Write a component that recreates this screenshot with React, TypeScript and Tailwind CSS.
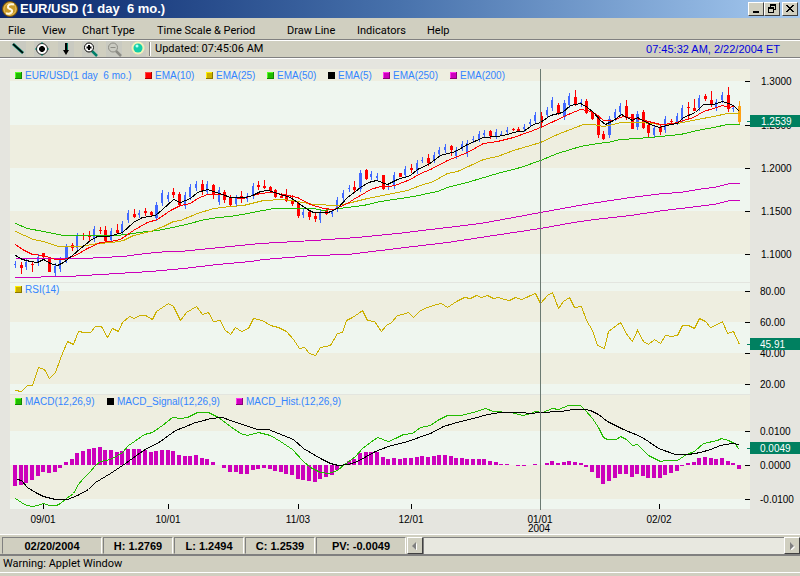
import React from 'react';

type Tone = 'up' | 'down' | 'last';
type Candle = [high: number, low: number, top: number, bottom: number, tone: Tone];

const FIRST_X = 15;
const STEP = 5.656;
const barX = (i: number) => Math.round(FIRST_X + i * STEP);

const toneColors: Record<Tone, string> = {
  up: '#4169ff',
  down: '#ff0000',
  last: '#ffa114',
};

const up = (high: number, low: number): Candle => [high, low, high + 3, low - 3, 'up'];
const down = (high: number, low: number, top: number, bottom: number): Candle => [high, low, top, bottom, 'down'];

const candles: Candle[] = [
  up(261, 268), down(262, 274, 265, 268), up(259, 270), down(261, 272, 264, 265), up(254, 266),
  down(253, 258, 253, 257), down(257, 272, 257, 272), up(263, 276), up(257, 272), up(244, 263),
  down(243, 251, 245, 248), up(233, 251), down(233, 240, 235, 236), down(231, 241, 236, 237), up(226, 242),
  down(227, 234, 230, 231), down(226, 242, 230, 241), up(228, 243), down(224, 234, 230, 233), up(221, 235),
  up(210, 223), down(209, 218, 214, 217), up(210, 218), down(208, 216, 211, 213), down(211, 216, 212, 215),
  up(202, 221), up(190, 206), up(192, 202), down(188, 198, 192, 195), down(192, 207, 194, 205),
  up(192, 209), up(184, 200), up(181, 191), down(180, 195, 184, 191), up(181, 195),
  down(184, 199, 185, 195), up(187, 205), down(190, 203, 192, 200), down(195, 206, 198, 205), up(195, 207),
  down(191, 203, 196, 199), up(193, 202), up(183, 199), down(181, 190, 185, 187), down(180, 189, 186, 188),
  down(186, 192, 187, 191), down(189, 198, 190, 197), down(193, 198, 196, 198), down(189, 202, 196, 201), down(195, 206, 200, 204),
  down(201, 218, 203, 216), up(209, 218), down(210, 220, 212, 217), down(213, 222, 216, 219), up(210, 223),
  down(209, 215, 210, 214), up(209, 217), up(197, 212), up(190, 201), up(185, 192),
  down(181, 192, 187, 190), up(170, 192), down(169, 180, 170, 179), up(171, 180), up(173, 181),
  down(175, 190, 175, 189), up(183, 190), up(172, 189), down(173, 177, 173, 177), up(166, 178),
  down(164, 173, 168, 170), up(160, 174), up(157, 163), down(154, 166, 158, 163), up(152, 163),
  up(147, 157), up(144, 153), down(145, 156, 146, 150), up(147, 159), up(141, 151),
  up(140, 157), up(136, 143), up(131, 142), up(130, 138), down(130, 139, 131, 136),
  up(129, 139), up(131, 136), up(127, 135), down(128, 131, 129, 130), down(127, 131, 129, 131),
  up(124, 132), up(119, 127), up(112, 124), down(112, 126, 116, 123), up(107, 118),
  up(97, 111), down(103, 115, 105, 114), up(100, 120), up(93, 108), down(90, 106, 97, 104),
  up(99, 107), down(99, 114, 101, 113), down(111, 120, 112, 119), down(115, 138, 118, 135), down(131, 140, 134, 139),
  up(116, 138), up(109, 121), up(103, 115), down(100, 120, 106, 118), down(114, 129, 114, 129),
  up(111, 130), down(110, 129, 112, 128), down(122, 137, 125, 133), up(125, 138), down(124, 135, 127, 132),
  up(116, 133), down(119, 125, 121, 122), up(113, 125), up(105, 123), down(102, 118, 107, 108),
  down(99, 111, 108, 111), up(95, 111), down(94, 101, 96, 99), down(91, 107, 100, 104), up(99, 111),
  up(92, 103), down(87, 112, 95, 109), up(105, 112), [101, 125, 106, 122, 'last'],
];

const histogram = [
  -21, -20, -18, -15, -11, -7, -8, -7, -3, 3, 6, 12, 14, 16, 17, 18, 15, 15, 13, 14,
  16, 16, 16, 15, 13, 14, 15, 15, 14, 10, 9, 9, 10, 7, 6, 3, 0, -3, -7, -7,
  -9, -9, -5, -4, -3, -4, -6, -7, -9, -10, -14, -15, -16, -17, -14, -12, -10, -5, 0, 4,
  6, 12, 13, 13, 13, 8, 6, 7, 6, 7, 7, 8, 9, 8, 9, 10, 10, 9, 7, 7,
  6, 6, 6, 6, 4, 3, 1, 1, 0, -1, -1, 0, 1, 0, 2, 4, 2, 3, 4, 3,
  2, -2, -7, -13, -19, -16, -13, -9, -9, -12, -9, -11, -13, -13, -13, -10, -8, -6, -1, 2,
  3, 7, 8, 7, 6, 7, 4, 2, -4,
];

const priceLines = [
  {
    name: 'EMA(200)',
    color: '#cc00bb',
    points:
      '15,258 85,258 100,257 123,256 145,253 167,251 180,251 220,247 260,243 313,240 357,237 397,233 430,229 447,227 480,223 513,217 540,212 573,206 597,202 630,197 663,193 680,192 697,189 713,187 730,183 739,183',
  },
  {
    name: 'EMA(250)',
    color: '#cc00bb',
    points:
      '15,277 67,276 100,274 150,271 183,268 217,264 250,261 263,259 313,255 347,254 380,250 413,246 447,242 480,237 513,232 540,228 573,222 594,219 630,215 663,210 680,208 713,204 730,200 739,200',
  },
  {
    name: 'EMA(50)',
    color: '#22bb00',
    points:
      '15,223 27,228 43,231 63,235 78,235 115,235 127,234 138,232 157,230 172,227 190,223 200,220 217,217 230,216 247,213 273,208 313,208 323,210 338,208 363,205 380,201 413,196 437,191 447,187 470,181 497,173 520,167 540,160 557,153 580,146 597,143 607,142 620,139 637,138 660,136 680,134 697,130 713,127 727,124 739,124',
  },
  {
    name: 'EMA(25)',
    color: '#ccb000',
    points:
      '15,231 33,239 43,241 58,246 80,246 97,243 112,242 123,240 133,235 150,231 163,226 173,221 180,220 197,213 213,208 230,206 243,205 263,200 283,199 297,201 313,204 337,205 347,203 367,198 387,194 407,190 420,185 433,181 447,173 457,171 470,165 483,159 497,156 513,150 530,145 540,142 557,134 570,129 583,124 593,124 603,126 613,124 620,122 640,122 660,124 677,123 697,119 713,116 727,113 739,113',
  },
  {
    name: 'EMA(10)',
    color: '#ff0000',
    points:
      '15,244 22,249 32,254 43,255 55,259 63,259 75,255 87,248 100,242 110,241 120,239 133,230 147,222 157,219 170,210 180,205 190,203 197,198 207,194 222,194 230,197 243,198 252,195 260,193 270,192 283,194 297,197 310,204 323,208 333,209 347,203 353,199 360,195 370,189 380,186 390,186 397,184 410,179 420,173 430,169 447,160 467,152 483,143 497,141 513,137 530,131 540,127 553,121 570,113 580,109 587,110 595,113 603,120 612,120 623,116 640,119 660,124 673,123 683,120 693,117 703,111 713,108 722,105 728,107 734,106 739,111',
  },
  {
    name: 'EMA(5)',
    color: '#000000',
    points:
      '15,255 22,259 30,261 37,262 43,259 50,263 57,265 63,262 72,255 80,248 90,240 97,236 108,236 122,232 133,222 142,217 155,215 162,209 173,199 180,202 190,198 197,192 207,189 213,191 222,194 230,197 245,197 252,195 260,191 268,190 277,193 290,197 297,202 307,209 313,212 323,212 328,212 337,208 347,197 355,191 360,187 368,182 376,180 387,184 397,179 410,175 417,169 428,164 440,155 455,151 467,144 483,137 497,136 503,135 517,131 523,131 533,124 540,122 550,115 562,112 570,105 580,103 587,107 593,112 600,120 605,124 613,120 621,114 632,120 637,117 650,124 659,127 670,124 677,123 683,117 695,112 703,104 713,104 722,101 728,103 733,105 739,111',
  },
];

const rsiLine =
  '15,390 21,391 27,385 32,385 38,367 44,369 49,378 55,372 60,358 67,341 73,344 78,331 84,332 90,332 95,326 101,326 107,337 112,328 118,331 122,322 129,316 134,318 139,315 145,315 152,319 156,311 162,307 168,303 173,306 180,320 186,312 196,306 202,314 208,312 213,321 220,320 224,329 230,334 235,327 241,331 248,328 253,318 262,320 270,325 278,327 286,331 293,339 299,348 304,347 309,353 315,355 320,347 330,345 337,333 342,332 346,320 352,317 358,313 362,310 367,320 374,321 381,331 386,325 391,322 397,315 402,314 408,312 413,317 419,311 424,308 430,306 436,304 441,303 447,307 453,303 458,300 464,297 470,298 476,295 481,297 487,295 493,298 498,297 504,299 509,300 515,297 521,299 526,297 530,295 535,293 540,303 547,295 552,292 558,308 563,301 569,297 574,307 581,306 586,320 592,330 597,345 604,348 608,331 620,322 627,335 632,341 637,330 643,341 648,344 654,339 660,343 665,335 671,336 677,335 682,325 688,325 694,328 699,318 705,321 710,327 717,324 722,321 727,333 733,331 739,344';

const macdLine =
  '15,498 21,502 26,505 32,506 37,505 43,503 49,505 56,505 60,503 66,498 73,493 78,484 83,478 89,472 95,465 100,461 106,460 112,458 122,452 128,445 134,441 144,434 152,432 162,425 172,417 180,418 187,417 197,412 208,412 218,417 230,426 240,433 247,435 258,432 270,435 280,441 292,449 303,461 310,467 320,472 328,473 337,470 343,465 355,456 362,448 370,442 377,437 388,441 395,438 403,434 412,433 420,427 430,425 437,420 447,415 460,415 473,412 485,408 493,411 510,412 523,415 530,413 535,411 542,412 552,408 558,409 568,405 580,405 585,410 592,418 598,427 603,437 607,439 616,439 620,436 626,439 632,445 637,444 648,455 660,461 665,460 677,460 686,454 694,451 703,443 717,440 721,438 728,440 734,443 739,449';

const signalLine =
  '17,479 21,480 27,487 35,492 43,496 55,499 67,499 77,495 88,489 95,482 110,473 125,463 143,450 160,441 175,430 183,427 195,422 200,421 210,418 222,417 230,420 245,425 257,429 268,429 278,433 293,439 303,448 320,458 330,463 338,465 348,464 357,461 375,451 388,446 407,441 430,433 443,426 460,421 473,418 487,414 500,412 520,412 530,413 540,412 560,411 573,409 585,409 590,410 598,414 607,421 623,429 640,436 648,441 658,448 675,454 688,454 700,452 710,449 720,445 732,443 739,444';

const bands = [
  { y: 69, height: 12 }, { y: 125, height: 43 }, { y: 211, height: 43 },
  { y: 291, height: 31 }, { y: 353, height: 31 },
  { y: 395, height: 36 }, { y: 465, height: 34 },
];

const yTicks = [
  { y: 81, label: '1.3000', x: 761 },
  { y: 125, label: '1.2500', x: 761 },
  { y: 168, label: '1.2000', x: 761 },
  { y: 211, label: '1.1500', x: 761 },
  { y: 254, label: '1.1000', x: 761 },
  { y: 291, label: '80.00', x: 760 },
  { y: 322, label: '60.00', x: 760 },
  { y: 353, label: '40.00', x: 760 },
  { y: 384, label: '20.00', x: 760 },
  { y: 431, label: '0.0100', x: 760 },
  { y: 465, label: '0.0000', x: 760 },
  { y: 499, label: '-0.0100', x: 760 },
];

const xTicks = [
  { x: 43, label: '09/01' },
  { x: 168, label: '10/01' },
  { x: 298, label: '11/03' },
  { x: 411, label: '12/01' },
  { x: 540, label: '01/01', year: '2004' },
  { x: 659, label: '02/02' },
];

const currentValues = [
  { y: 121, label: '1.2539', x: 761 },
  { y: 344, label: '45.91', x: 760 },
  { y: 448, label: '0.0049', x: 760 },
];

const legends = [
  { x: 15, y: 75, label: 'EUR/USD(1 day  6 mo.)', fill: '#22bb00', light: '#55ff22', dark: '#118800' },
  { x: 145, y: 75, label: 'EMA(10)', fill: '#ff0000', light: '#ff4444', dark: '#aa0000' },
  { x: 206, y: 75, label: 'EMA(25)', fill: '#ccb000', light: '#ffee00', dark: '#8a7700' },
  { x: 267, y: 75, label: 'EMA(50)', fill: '#22bb00', light: '#55ff22', dark: '#118800' },
  { x: 328, y: 75, label: 'EMA(5)', fill: '#000000', light: '#000000', dark: '#000000' },
  { x: 383, y: 75, label: 'EMA(250)', fill: '#cc00bb', light: '#ff33ee', dark: '#880077' },
  { x: 450, y: 75, label: 'EMA(200)', fill: '#cc00bb', light: '#ff33ee', dark: '#880077' },
  { x: 15, y: 289, label: 'RSI(14)', fill: '#ccb000', light: '#ffee00', dark: '#8a7700' },
  { x: 15, y: 401, label: 'MACD(12,26,9)', fill: '#22bb00', light: '#55ff22', dark: '#118800' },
  { x: 107, y: 401, label: 'MACD_Signal(12,26,9)', fill: '#000000', light: '#000000', dark: '#000000' },
  { x: 236, y: 401, label: 'MACD_Hist.(12,26,9)', fill: '#cc00bb', light: '#ff33ee', dark: '#880077' },
];

const menus = [
  { label: 'File', width: 'w-[34px]' },
  { label: 'View', width: 'w-[40px]' },
  { label: 'Chart Type', width: 'w-[75px]' },
  { label: 'Time Scale & Period', width: 'w-[130px]' },
  { label: 'Draw Line', width: 'w-[70px]' },
  { label: 'Indicators', width: 'w-[70px]' },
  { label: 'Help', width: 'w-[40px]' },
];

const readouts = [
  { label: '02/20/2004', width: 'w-[100px]' },
  { label: 'H: 1.2769', width: 'w-[70px]' },
  { label: 'L: 1.2494', width: 'w-[70px]' },
  { label: 'C: 1.2539', width: 'w-[70px]' },
  { label: 'PV: -0.0049', width: 'w-[90px]' },
];

const TitleBar: React.FC = () => (
  <header className="flex h-[18px] items-center justify-between bg-linear-to-r from-[#0a246a] via-[#4872ac] to-[#a6caf0] pl-0.5 pr-0.5">
    <div className="flex items-center gap-0.5">
      <svg viewBox="0 0 16 16" className="h-4 w-4">
        <circle cx="8" cy="8" r="7.5" fill="#c99a28" stroke="#6d4d0c" />
        <circle cx="8" cy="8" r="6" fill="none" stroke="#e4bc5c" />
        <path
          d="M12 3.500C8 2.500 5.500 4 6 6.500c.3 1.500 4 1.500 4.200 3.200.3 2.300-3 3.600-6.200 2.600"
          fill="none"
          stroke="#fff8e0"
          strokeWidth="2"
        />
      </svg>
      <h1 className="text-[13px] leading-[18px] font-bold whitespace-pre text-white">EUR/USD (1 day  6 mo.)</h1>
    </div>
    <div className="flex">
      {['Minimize', 'Restore', 'Close'].map(name => (
        <button
          key={name}
          aria-label={name}
          className="flex h-[14px] w-4 items-center justify-center border border-t-white border-l-white border-r-[#404040] border-b-[#404040] bg-[#d0cfc0] last:ml-0.5"
        >
          <svg viewBox="0 0 12 10" className="h-[10px] w-3 shrink-0" shapeRendering="crispEdges">
            {name === 'Minimize' && <path d="M3 7h6v2H3z" />}
            {name === 'Restore' && (
              <path d="M4 0h6v6H8V5h1V2H5v1H4zM2 3h6v6H2zM3 5v3h4V5z" fillRule="evenodd" />
            )}
            {name === 'Close' && (
              <path d="M2 1h2v1h1v1h2V2h1V1h2v1H9v1H8v1H7v1h1v1h1v1h1v1H8V7H7V6H5v1H4v1H2V7h1V6h1V5h1V4H4V3H3V2H2z" />
            )}
          </svg>
        </button>
      ))}
    </div>
  </header>
);

const Magnifier: React.FC<{ color: string; handle: string; plus?: boolean }> = ({ color, handle, plus }) => (
  <>
    <path d="M10 10l5 5" stroke={handle} strokeWidth="2.500" />
    <circle cx="7" cy="6.500" r="4.500" fill={plus ? '#fff' : 'none'} stroke={color} />
    <path d="M4.500 6.500h5" stroke={color} strokeWidth={plus ? 2 : 1} />
    {plus && <path d="M7 4v5" stroke={color} strokeWidth="2" />}
  </>
);

const tools = [
  {
    name: 'Trend line',
    icon: (
      <>
        <path d="M3 3l10 9" stroke="#00806a" strokeWidth="3" />
        <path d="M3 3l10 9" stroke="#000" strokeWidth="1.500" />
      </>
    ),
  },
  {
    name: 'Crosshair',
    icon: (
      <>
        <circle cx="8" cy="8" r="5.500" fill="#fff" stroke="#222" />
        <path d="M7 5h2l2 2v2l-2 2H7L5 9V7z" />
        <path d="M8 1v2M8 13v2M1 8h2M13 8h2" stroke="#00806a" />
      </>
    ),
  },
  {
    name: 'Arrow',
    icon: (
      <>
        <path d="M8 2v8" stroke="#000" strokeWidth="2" />
        <path d="M9.500 2v8" stroke="#00806a" />
        <path d="M5 9h6l-3 5z" />
      </>
    ),
  },
  { name: 'Zoom in', icon: <Magnifier color="#000" handle="#00806a" plus /> },
  { name: 'Zoom out', icon: <Magnifier color="#8c8c84" handle="#8c8c84" /> },
  {
    name: 'Connection status',
    icon: (
      <>
        <circle cx="8" cy="7" r="6.500" fill="#f2f0b8" />
        <circle cx="8" cy="7" r="4.500" fill="#12cfa8" />
        <circle cx="7" cy="5" r="1.500" fill="#b8fff0" />
      </>
    ),
  },
];

const Toolbar: React.FC = () => (
  <div className="flex h-[17px] items-center border-b border-[#808080] pl-2.5 pr-5">
    <div className="flex gap-2">
      {tools.map(tool => (
        <button key={tool.name} aria-label={tool.name} className="h-4 w-4 bg-[#c9cac1]">
          <svg viewBox="0 0 16 16" className="h-4 w-4">
            {tool.icon}
          </svg>
        </button>
      ))}
    </div>
    <div className="ml-[3px] h-[14px] border-l border-r border-l-[#808080] border-r-white" />
    <span className="ml-1 flex-1 font-[Roboto,sans-serif] text-[11px] leading-4">
      Updated: 07:45:06 AM
    </span>
    <time className="text-[11px] leading-4 text-[#0000dd]">07:45:32 AM, 2/22/2004 ET</time>
  </div>
);

const Chart: React.FC = () => (
  <svg
    viewBox="0 59 800 475"
    className="block h-auto w-full bg-[#e5e5df]"
    fontFamily="'Liberation Sans', Arial, sans-serif"
    fontSize="10"
    role="img"
    aria-label="EUR/USD price, RSI and MACD"
  >
    <g shapeRendering="crispEdges">
      <rect x="10" y="69" width="740" height="440" fill="#eff6ef" />
      {bands.map(band => (
        <rect key={band.y} x="10" y={band.y} width="740" height={band.height} fill="#eeeee0" />
      ))}
      <path d="M10 282.500H750M10 394.500H750" stroke="#e3e5df" />

      {/* Candles */}
      {candles.map(([high, low, top, bottom, tone], i) => {
        const x = barX(i);
        const wide = tone !== 'up' || low - high > 18;
        return (
          <g key={i} fill={toneColors[tone]}>
            <rect x={x} y={high} width="1" height={low - high} />
            <rect x={x - 1} y={top} width={wide ? 3 : 2} height={Math.max(1, bottom - top)} />
          </g>
        );
      })}

      {/* MACD histogram */}
      {histogram.map((value, i) => (
        <rect
          key={i}
          x={barX(i) - 2}
          y={value > 0 ? 465 - value : 465}
          width="4"
          height={Math.abs(value)}
          fill="#cc00bb"
        />
      ))}

      <g fill="none" transform="translate(0.5 0.5)">
        {priceLines.map(line => (
          <polyline key={line.name} points={line.points} stroke={line.color} />
        ))}
        <polyline points={rsiLine} stroke="#ccb000" />
        <polyline points={macdLine} stroke="#22bb00" />
        <polyline points={signalLine} stroke="#000000" />
      </g>

      <rect x="540" y="69" width="1" height="441" fill="#6b7a72" />
    </g>

    {yTicks.map(tick => (
      <g key={tick.y}>
        <rect x="745" y={tick.y} width="5" height="1" />
        <text x={tick.x} y={tick.y + 4}>{tick.label}</text>
      </g>
    ))}

    {xTicks.map(tick => (
      <g key={tick.x} textAnchor="middle">
        {!tick.year && <rect x={tick.x} y="504" width="1" height="5" />}
        <text x={tick.x} y="523">{tick.label}</text>
        {tick.year && <text x={tick.x - 1} y="532">{tick.year}</text>}
      </g>
    ))}

    {currentValues.map(value => (
      <g key={value.y}>
        <rect x="747" y={value.y} width="3" height="1" fill="#008060" />
        <rect x="750" y={value.y - 6} width="50" height="12" fill="#008060" />
        <text x={value.x} y={value.y + 4} fill="#ffffff">{value.label}</text>
      </g>
    ))}

    {legends.map(item => (
      <g key={item.label}>
        <rect x={item.x} y={item.y - 3} width="7" height="7" fill={item.dark} />
        <rect x={item.x} y={item.y - 3} width="6" height="6" fill={item.light} />
        <rect x={item.x + 1} y={item.y - 2} width="5" height="5" fill={item.fill} />
        <text x={item.x + 10} y={item.y + 4} fill="#3385ff" className="whitespace-pre">{item.label}</text>
      </g>
    ))}
  </svg>
);

const ScrollButton: React.FC<{ name: string; path: string }> = ({ name, path }) => (
  <button
    aria-label={name}
    className="flex w-4 items-center justify-center border border-t-white border-l-white border-r-[#404040] border-b-[#404040] bg-[#d0cfc0]"
  >
    <svg viewBox="0 0 8 8" className="h-2 w-2">
      <path d={path} transform="translate(1 1)" fill="#fff" />
      <path d={path} fill="#808080" />
    </svg>
  </button>
);

const StatusBar: React.FC = () => (
  <div className="flex h-[22px] border-t border-b-2 border-t-white border-b-[#808080] pl-0.5 pt-0.5">
    <div className="flex gap-px">
      {readouts.map(item => (
        <div
          key={item.label}
          className={`${item.width} border border-t-[#808080] border-l-[#808080] border-r-white border-b-transparent text-center text-[11px] leading-4 font-bold`}
        >
          {item.label}
        </div>
      ))}
    </div>
    <div className="ml-px flex flex-1 bg-[#e8e8e0]">
      <ScrollButton name="Scroll left" path="M5 0v8L1 4z" />
      <div className="flex-1 border-t border-l border-[#808080]" />
      <ScrollButton name="Scroll right" path="M2 0v8l4-4z" />
    </div>
  </div>
);

export default function App() {
  return (
    <div className="min-h-screen bg-[#d0cfc0] font-['Liberation_Sans',Arial,sans-serif] text-black">
      <TitleBar />
      <nav className="flex h-[22px] items-center border-b border-[#808080] pl-2 pt-1">
        {menus.map(menu => (
          <button
            key={menu.label}
            className={`${menu.width} text-left font-[Roboto,sans-serif] text-[11px] leading-4 whitespace-nowrap`}
          >
            {menu.label}
          </button>
        ))}
      </nav>
      <div className="border-t border-b border-white">
        <Toolbar />
      </div>
      <Chart />
      <StatusBar />
      <footer className="h-[17px] border-b border-white pl-[3px] font-[Roboto,sans-serif] text-[11px] leading-4">
        Warning: Applet Window
      </footer>
    </div>
  );
}
